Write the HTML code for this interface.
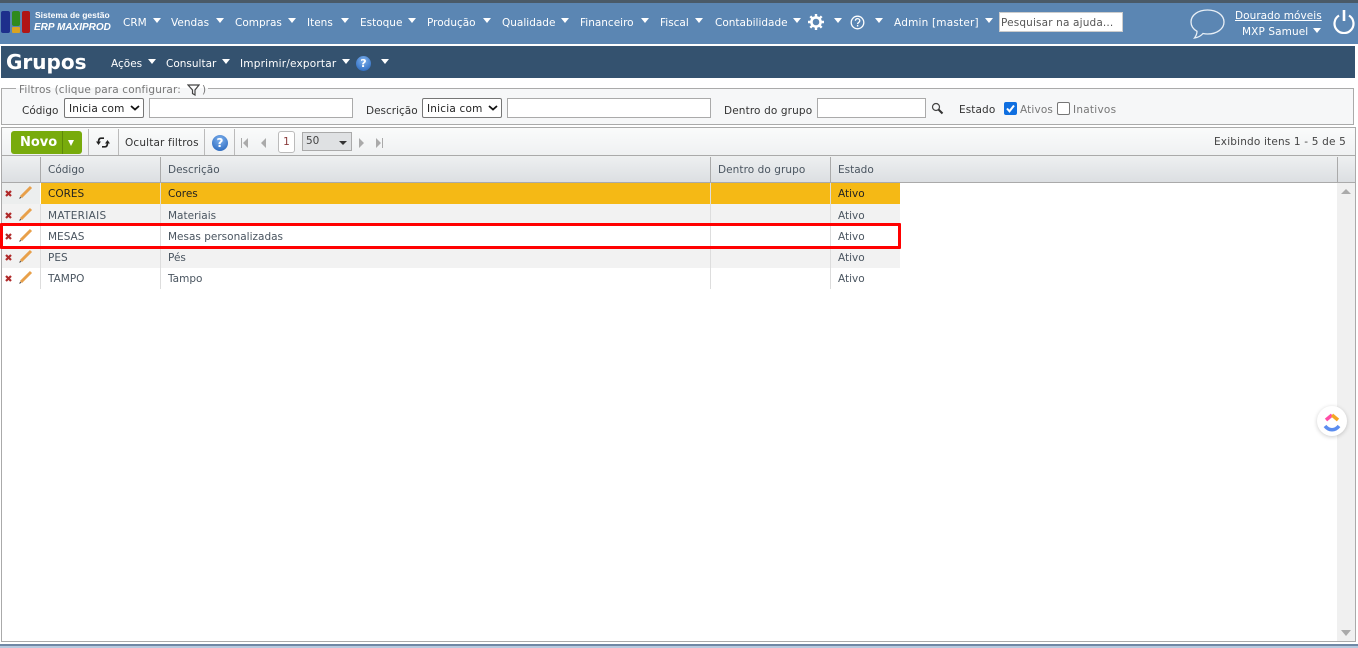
<!DOCTYPE html>
<html><head><meta charset="utf-8"><style>
html,body{margin:0;padding:0;width:1358px;height:648px;overflow:hidden;background:#fff}
body{position:relative;font-family:"DejaVu Sans","Liberation Sans",sans-serif;font-size:10.5px;color:#444}
.a{position:absolute;white-space:nowrap}
.m{color:#fff;top:16px;line-height:14px}
.c{position:absolute;width:0;height:0;border-left:4.5px solid transparent;border-right:4.5px solid transparent;border-top:5px solid #fff}
.b{position:absolute;box-sizing:border-box;background:#fff;border:1px solid #aaa}
.s{position:absolute;box-sizing:border-box;background:#fff;border:1px solid #767676;border-radius:2px;height:20px;color:#222;padding:3px 0 0 4px;line-height:14px;letter-spacing:.2px}
.v{position:absolute;width:1px;background:#bbb}
.t{position:absolute;line-height:14px;white-space:nowrap;color:#4a5560;margin-top:1px}
</style></head><body>
<div class="a" style="left:0;top:0;width:1358px;height:44px;background:#5b86b3"></div>
<div class="a" style="left:0;top:0;width:1358px;height:3px;background:#4a5a68"></div>
<div class="a" style="left:1px;top:127px;width:1px;height:515px;background:#aaa"></div>
<div class="a" style="left:1355px;top:127px;width:1px;height:515px;background:#aaa"></div>
<div class="a" style="left:0;top:644px;width:1358px;height:2px;background:#7088a5"></div>
<div class="a" style="left:0;top:646px;width:1358px;height:2px;background:#b8cbe0"></div>
<div class="a" style="left:1px;top:641px;width:1355px;height:1px;background:#aaa"></div>
<div class="a" style="left:1px;top:11px;width:9px;height:22px;background:#1d2f8c;border-radius:2px"></div>
<div class="a" style="left:12px;top:11px;width:8px;height:15px;background:#2f8a1e;border-radius:2px"></div>
<div class="a" style="left:12px;top:27px;width:8px;height:6px;background:#d9a320;border-radius:1px"></div>
<div class="a" style="left:22px;top:11px;width:8px;height:22px;background:#b01515;border-radius:2px"></div>
<div class="a" style="left:35px;top:10px;color:#fff;font:bold 8.5px/11px 'Liberation Sans',sans-serif">Sistema de gestão</div>
<div class="a" style="left:34px;top:21px;color:#fff;font:italic bold 10px/14px 'Liberation Sans',sans-serif">ERP MAXIPROD</div>
<span class="a m" style="left:123px">CRM</span><i class="c" style="left:153px;top:18px"></i>
<span class="a m" style="left:171px">Vendas</span><i class="c" style="left:216px;top:18px"></i>
<span class="a m" style="left:235px">Compras</span><i class="c" style="left:288px;top:18px"></i>
<span class="a m" style="left:307px">Itens</span><i class="c" style="left:341px;top:18px"></i>
<span class="a m" style="left:360px">Estoque</span><i class="c" style="left:408px;top:18px"></i>
<span class="a m" style="left:427px">Produção</span><i class="c" style="left:483px;top:18px"></i>
<span class="a m" style="left:502px">Qualidade</span><i class="c" style="left:561px;top:18px"></i>
<span class="a m" style="left:580px">Financeiro</span><i class="c" style="left:641px;top:18px"></i>
<span class="a m" style="left:660px">Fiscal</span><i class="c" style="left:695px;top:18px"></i>
<span class="a m" style="left:715px">Contabilidade</span><i class="c" style="left:793px;top:18px"></i>
<svg class="a" style="left:808px;top:14px" width="16" height="16" viewBox="0 0 16 16"><circle cx="8" cy="8" r="4.6" fill="none" stroke="#fff" stroke-width="2.6"/><g stroke="#fff" stroke-width="2.4"><path d="M8 0v3M8 13v3M0 8h3M13 8h3M2.3 2.3l2.1 2.1M11.6 11.6l2.1 2.1M2.3 13.7l2.1-2.1M11.6 4.4l2.1-2.1"/></g></svg>
<i class="c" style="left:834px;top:18px"></i>
<svg class="a" style="left:850px;top:15px" width="15" height="15" viewBox="0 0 15 15"><circle cx="7.5" cy="7.5" r="6.3" fill="none" stroke="#fff" stroke-width="1.3"/><path d="M5.4 5.8c0-3 4.4-2.8 4.4 0 0 1.700-2.200 1.600-2.200 3.300" fill="none" stroke="#fff" stroke-width="1.3"/><rect x="6.900" y="10" width="1.400" height="1.500" fill="#fff"/></svg>
<i class="c" style="left:875px;top:18px"></i>
<span class="a m" style="left:894px;letter-spacing:.2px">Admin [master]</span><i class="c" style="left:985px;top:18px"></i>
<div class="b" style="left:999px;top:12px;width:124px;height:20px;border-color:#ccc;color:#555;padding:3px 0 0 1px;line-height:14px;letter-spacing:.15px">Pesquisar na ajuda...</div>
<svg class="a" style="left:1189px;top:8px" width="37" height="32" viewBox="0 0 37 32"><path d="M18.500 2C9 2 2 7.200 2 14c0 4 2.500 7.300 6 9.300 0 2.500-.8 4.500-2.500 6.700 3.500-.5 6.500-2.200 8.500-4.500 1.500.3 3 .5 4.500.5C28 26 35 20.800 35 14S28 2 18.500 2z" fill="none" stroke="#e8eff6" stroke-width="1.300"/></svg>
<span class="a" style="left:1235px;top:9px;color:#fff;text-decoration:underline;line-height:14px;letter-spacing:.05px">Dourado móveis</span>
<span class="a" style="left:1242px;top:25px;color:#fff;line-height:14px;letter-spacing:.1px">MXP Samuel</span><i class="c" style="left:1313px;top:28px"></i>
<svg class="a" style="left:1332px;top:9px" width="24" height="25" viewBox="0 0 24 25"><path d="M7 6.500a9.500 9.500 0 1 0 10 0" fill="none" stroke="#fff" stroke-width="2.200"/><path d="M12 1v11" stroke="#fff" stroke-width="2.600"/></svg>

<div class="a" style="left:1px;top:46px;width:1354px;height:32px;background:#34526f"></div>
<div class="a" style="left:6px;top:49px;color:#fff;font:bold 20px/26px 'DejaVu Sans',sans-serif">Grupos</div>
<span class="a" style="left:111px;top:57px;color:#fff;line-height:14px">Ações</span><i class="c" style="left:148px;top:59px"></i>
<span class="a" style="left:166px;top:57px;color:#fff;line-height:14px">Consultar</span><i class="c" style="left:222px;top:59px"></i>
<span class="a" style="left:240px;top:57px;color:#fff;line-height:14px;letter-spacing:.2px">Imprimir/exportar</span><i class="c" style="left:342px;top:59px"></i>
<div class="a" style="left:356px;top:56px;width:15px;height:15px;border-radius:50%;background:radial-gradient(circle at 50% 30%,#7fb2ee,#1f5fb8);color:#fff;font:bold 11px/15px 'DejaVu Sans';text-align:center">?</div>
<i class="c" style="left:381px;top:59px"></i>

<div class="a" style="left:1px;top:88px;width:1353px;height:37px;box-sizing:border-box;border:1px solid #aaa;background:#f6f7f8"></div>
<div class="a" style="left:16px;top:82px;height:14px;width:192px;background:linear-gradient(#fff 6px,#f6f7f8 6px)"></div>
<span class="a" style="left:19px;top:83px;color:#777;line-height:14px;letter-spacing:.13px">Filtros (clique para configurar:</span>
<svg class="a" style="left:187px;top:84px" width="13" height="12" viewBox="0 0 13 12"><path d="M1 1h11L8 6v5L5.500 9.500V6z" fill="none" stroke="#444" stroke-width="1.200"/></svg>
<span class="a" style="left:202px;top:83px;color:#777;line-height:14px">)</span>
<span class="t" style="left:22px;top:103px;color:#333">Código</span>
<div class="s" style="left:64px;top:98px;width:80px">Inicia com</div>
<svg class="a" style="left:130px;top:105px" width="10" height="6"><path d="M1 1l4 3.500L9 1" fill="none" stroke="#111" stroke-width="1.800"/></svg>
<div class="b" style="left:149px;top:98px;width:204px;height:20px"></div>
<span class="t" style="left:366px;top:103px;color:#333">Descrição</span>
<div class="s" style="left:422px;top:98px;width:80px">Inicia com</div>
<svg class="a" style="left:488px;top:105px" width="10" height="6"><path d="M1 1l4 3.500L9 1" fill="none" stroke="#111" stroke-width="1.800"/></svg>
<div class="b" style="left:507px;top:98px;width:204px;height:20px"></div>
<span class="t" style="left:724px;top:103px;color:#333;letter-spacing:.13px">Dentro do grupo</span>
<div class="b" style="left:817px;top:98px;width:109px;height:20px"></div>
<svg class="a" style="left:931px;top:102px" width="13" height="13" viewBox="0 0 13 13"><circle cx="5" cy="5" r="3.500" fill="none" stroke="#444" stroke-width="1.200"/><path d="M7.500 7.500l4 4" stroke="#333" stroke-width="2"/></svg>
<span class="t" style="left:959px;top:102px;color:#333;letter-spacing:.1px">Estado</span>
<div class="a" style="left:1004px;top:102px;width:13px;height:13px;background:#0f6fe0;border-radius:2px"></div>
<svg class="a" style="left:1004px;top:102px" width="13" height="13"><path d="M3 6.500l2.500 2.800L10 3.500" fill="none" stroke="#fff" stroke-width="2"/></svg>
<span class="t" style="left:1020px;top:102px;color:#777;letter-spacing:.15px">Ativos</span>
<div class="a" style="left:1057px;top:102px;width:13px;height:13px;box-sizing:border-box;border:1px solid #767676;background:#fff;border-radius:2px"></div>
<span class="t" style="left:1073px;top:102px;color:#777;letter-spacing:.25px">Inativos</span>

<div class="a" style="left:1px;top:127px;width:1355px;height:29px;box-sizing:border-box;border:1px solid #aaa;background:linear-gradient(#fafbfb,#eff1f2)"></div>
<div class="a" style="left:11px;top:131px;width:71px;height:23px;background:#78ab0c;border-radius:3px"></div>
<div class="v" style="left:62px;top:131px;height:23px;background:#5e8a08"></div>
<div class="a" style="left:20px;top:134px;color:#fff;font:bold 13px/17px 'DejaVu Sans',sans-serif">Novo</div>
<div class="a" style="left:68px;top:140px;width:0;height:0;border-left:3px solid transparent;border-right:3px solid transparent;border-top:6px solid #fff"></div>
<div class="v" style="left:88px;top:129px;height:26px"></div>
<svg class="a" style="left:96px;top:136px" width="14" height="13" viewBox="0 0 14 13"><path d="M8 2.200H5C3 2.200 2.500 3.800 2.500 6.500M6 10.800h3c2 0 2.500-1.600 2.500-4.300" fill="none" stroke="#222" stroke-width="1.700"/><path d="M0 5.500h5L2.500 9zM9 7.500h5L11.500 4z" fill="#222"/></svg>
<div class="v" style="left:118px;top:129px;height:26px"></div>
<span class="t" style="left:125px;top:135px;color:#333;letter-spacing:.15px">Ocultar filtros</span>
<div class="v" style="left:204px;top:129px;height:26px"></div>
<div class="a" style="left:212px;top:135px;width:16px;height:16px;border-radius:50%;background:radial-gradient(circle at 50% 30%,#7fb2ee,#1f5fb8);color:#fff;font:bold 12px/16px 'DejaVu Sans';text-align:center">?</div>
<div class="v" style="left:234px;top:129px;height:26px"></div>
<svg class="a" style="left:240px;top:138px" width="32" height="10"><path d="M1 0h1v10H1zM8 0v10L3 5zM26 0v10l-5-5z" fill="#aaa"/></svg>
<div class="a" style="left:278px;top:131px;width:17px;height:22px;box-sizing:border-box;border:1px solid #bbb;border-radius:3px;background:#fff;color:#8a3b3b;text-align:center;line-height:21px">1</div>
<div class="a" style="left:302px;top:132px;width:50px;height:19px;box-sizing:border-box;border:1px solid #aaa;background:#dfe1e3;line-height:16px;padding-left:3px;color:#444">50</div>
<div class="a" style="left:339px;top:141px;width:0;height:0;border-left:4.500px solid transparent;border-right:4.500px solid transparent;border-top:4.500px solid #333"></div>
<svg class="a" style="left:358px;top:138px" width="27" height="10"><path d="M1 0v10l5-5zM18 0v10l5-5zM24 0h1v10h-1z" fill="#aaa"/></svg>
<span class="t" style="left:1214px;top:134px;color:#444;letter-spacing:.17px">Exibindo itens 1 - 5 de 5</span>

<div class="a" style="left:2px;top:156px;width:1353px;height:27px;box-sizing:border-box;border-bottom:1px solid #aaa;background:linear-gradient(#eef0f1,#dcdfe2)"></div>
<div class="v" style="left:40px;top:157px;height:25px;background:#aaa"></div>
<div class="v" style="left:160px;top:157px;height:25px;background:#aaa"></div>
<div class="v" style="left:710px;top:157px;height:25px;background:#aaa"></div>
<div class="v" style="left:830px;top:157px;height:25px;background:#aaa"></div>
<div class="v" style="left:1337px;top:157px;height:25px;background:#aaa"></div>
<span class="t" style="left:48px;top:162px">Código</span>
<span class="t" style="left:168px;top:162px">Descrição</span>
<span class="t" style="left:718px;top:162px;letter-spacing:.07px">Dentro do grupo</span>
<span class="t" style="left:838px;top:162px">Estado</span>

<div class="a" style="left:2px;top:183px;width:38px;height:21px;background:#eceeee"></div>
<div class="a" style="left:41px;top:183px;width:859px;height:21px;background:#f5b915"></div>
<div class="a" style="left:2px;top:204px;width:898px;height:22px;background:#f2f2f2"></div>
<div class="a" style="left:2px;top:247px;width:898px;height:21px;background:#f2f2f2"></div>
<div class="v" style="left:40px;top:204px;height:85px;background:#ddd"></div>
<div class="v" style="left:160px;top:183px;height:106px;background:#ddd"></div>
<div class="v" style="left:710px;top:183px;height:106px;background:#ddd"></div>
<div class="v" style="left:830px;top:183px;height:106px;background:#ddd"></div>

<span class="t" style="left:48px;top:186px;color:#222">CORES</span><span class="t" style="left:168px;top:186px;color:#222">Cores</span><span class="t" style="left:838px;top:186px;color:#222">Ativo</span>
<span class="t" style="left:48px;top:208px;letter-spacing:.3px">MATERIAIS</span><span class="t" style="left:168px;top:208px">Materiais</span><span class="t" style="left:838px;top:208px">Ativo</span>
<span class="t" style="left:48px;top:229px">MESAS</span><span class="t" style="left:168px;top:229px">Mesas personalizadas</span><span class="t" style="left:838px;top:229px">Ativo</span>
<span class="t" style="left:48px;top:250px">PES</span><span class="t" style="left:168px;top:250px">Pés</span><span class="t" style="left:838px;top:250px">Ativo</span>
<span class="t" style="left:48px;top:271px">TAMPO</span><span class="t" style="left:168px;top:271px">Tampo</span><span class="t" style="left:838px;top:271px">Ativo</span>

<svg class="a" style="left:0;top:183px" width="40" height="106" viewBox="0 0 40 106">
<g stroke="#b02a2a" stroke-width="2.200" fill="none"><path d="M6 8l5 5M11 8l-5 5M6 30l5 5M11 30l-5 5M6 51l5 5M11 51l-5 5M6 72l5 5M11 72l-5 5M6 93l5 5M11 93l-5 5"/></g>
<g stroke="#e8a04a" stroke-width="3" fill="none"><path d="M21 14l10-10M21 36l10-10M21 57l10-10M21 78l10-10M21 99l10-10"/></g>
<g stroke="#555" stroke-width="1.200" fill="none"><path d="M19.500 15.500l1.500-1.500M19.500 37.500l1.500-1.500M19.500 58.500l1.500-1.500M19.500 79.500l1.500-1.500M19.500 100.500l1.500-1.500"/></g>
</svg>

<div class="a" style="left:0;top:223px;width:901px;height:26px;box-sizing:border-box;border:3px solid #f00;border-radius:1px"></div>

<div class="a" style="left:1337px;top:183px;width:18px;height:458px;background:#f0f0f0"></div>
<div class="a" style="left:1341px;top:189px;width:0;height:0;border-left:5px solid transparent;border-right:5px solid transparent;border-bottom:5px solid #aaa"></div>
<div class="a" style="left:1341px;top:630px;width:0;height:0;border-left:5px solid transparent;border-right:5px solid transparent;border-top:6px solid #aaa"></div>

<div class="a" style="left:1317px;top:406px;width:30px;height:30px;border-radius:50%;background:#fff;box-shadow:0 1px 4px rgba(0,0,0,.2)"></div>
<svg class="a" style="left:1317px;top:406px" width="30" height="30" viewBox="0 0 30 30"><path d="M9 14l6-5" stroke="#ff4da6" stroke-width="3.500" fill="none"/><path d="M15 9l6 5" stroke="#f5a623" stroke-width="3.500" fill="none"/><path d="M8 20c4 5 10 5 14 0" stroke="#5b8def" stroke-width="3.500" fill="none"/></svg>
</body></html>
